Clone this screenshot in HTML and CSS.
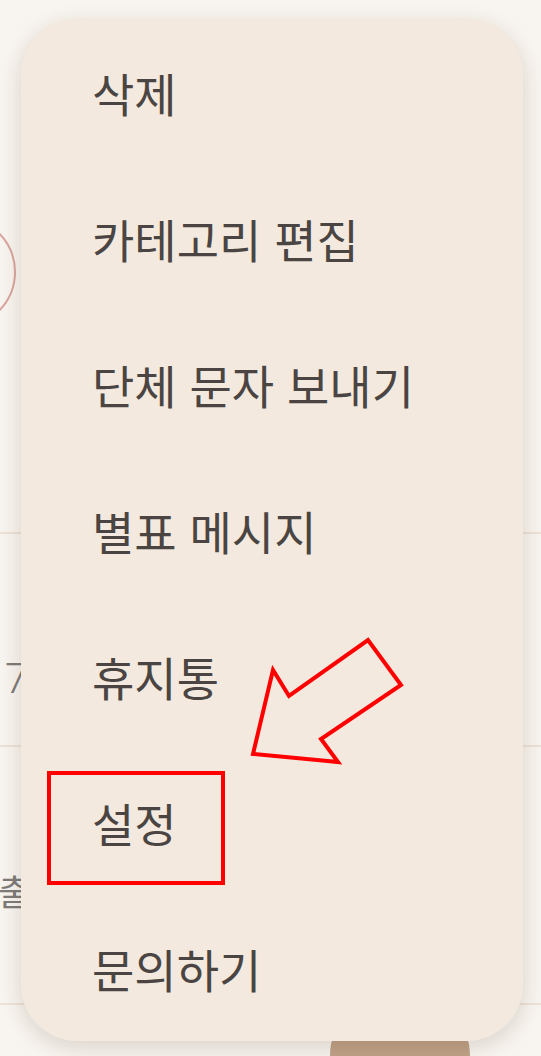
FILE: index.html
```html
<!DOCTYPE html>
<html lang="ko">
<head>
    <meta charset="UTF-8">
    <meta name="viewport" content="width=device-width, initial-scale=1.0">
    <title>메뉴</title>
    <link rel="stylesheet" href="styles.css">
</head>
<body>
    <div class="page">
        <div class="page-top">
            <div class="avatar"></div>
        </div>
        <div class="row row-first">
            <span class="row-text">7</span>
        </div>
        <div class="row row-second">
            <span class="row-text">출</span>
        </div>
        <div class="row row-last"></div>
    </div>

    <div class="fab"></div>

    <div class="menu">
        <div class="menu-item">삭제</div>
        <div class="menu-item">카테고리 편집</div>
        <div class="menu-item">단체 문자 보내기</div>
        <div class="menu-item">별표 메시지</div>
        <div class="menu-item">휴지통</div>
        <div class="menu-item">설정</div>
        <div class="menu-item">문의하기</div>
    </div>

    <svg class="marks" width="541" height="1056" viewBox="0 0 541 1056">
        <rect x="49" y="773" width="174" height="110" fill="none" stroke="#ff0000" stroke-width="4"/>
        <polygon points="253,754 273,670 289,696 368,640 401,685 321,739 338,762" fill="none" stroke="#ff0000" stroke-width="4" stroke-linejoin="miter"/>
    </svg>
</body>
</html>
```

FILE: styles.css
```css
body {
    margin: 0;
    padding: 0;
    width: 541px;
    height: 1056px;
    overflow: hidden;
    position: relative;
    background-color: #f8f4ef;
    font-family: "Noto Sans CJK KR", "Noto Sans", sans-serif;
}
.page {
    display: flex;
    flex-direction: column;
}
.page-top {
    height: 532px;
    display: flex;
    align-items: flex-start;
}
.avatar {
    width: 108px;
    height: 108px;
    margin-top: 216px;
    margin-left: -96px;
    border: 2px solid #d9a5a0;
    border-radius: 50%;
    flex-shrink: 0;
}
.row {
    border-top: 2px solid #ece2d8;
    display: flex;
    align-items: center;
    box-sizing: border-box;
}
.row-first {
    height: 213px;
    padding-top: 78px;
}
.row-second {
    height: 258px;
    padding-top: 30px;
}
.row-last {
    height: 51px;
}
.row-text {
    font-size: 36px;
    color: #7d7b79;
    margin-left: -2px;
}
.row-first .row-text {
    margin-left: 5px;
    font-size: 42px;
    font-family: "Roboto", sans-serif;
    font-weight: 300;
}
.fab {
    position: absolute;
    left: 330px;
    top: 992px;
    width: 140px;
    height: 64px;
    border-radius: 70px 70px 0 0 / 70px 70px 0 0;
    background-color: #c0a287;
}
.menu {
    position: absolute;
    left: 21px;
    top: 19px;
    width: 502px;
    height: 1022px;
    background-color: #f3e9de;
    border-radius: 56px;
    box-shadow: 0 6px 22px rgba(60, 40, 20, 0.16);
    display: flex;
    flex-direction: column;
}
.menu-item {
    height: 146px;
    display: flex;
    align-items: center;
    padding-left: 71px;
    font-size: 46px;
    font-weight: 400;
    color: #4a4542;
}
.marks {
    position: absolute;
    left: 0;
    top: 0;
}
```
